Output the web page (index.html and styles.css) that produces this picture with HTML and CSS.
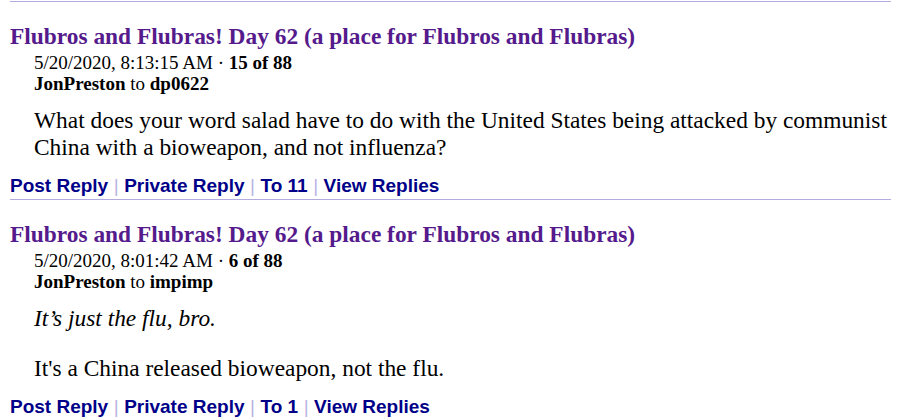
FILE: index.html
```html
<!DOCTYPE html>
<html>
<head>
<meta charset="utf-8">
<link rel="stylesheet" href="styles.css">
</head>
<body>
<div class="post">
  <h2 class="title"><a href="#">Flubros and Flubras! Day 62 (a place for Flubros and Flubras)</a></h2>
  <div class="meta">
    <div>5/20/2020, 8:13:15 AM · <b>15 of 88</b></div>
    <div><b>JonPreston</b> to <b>dp0622</b></div>
  </div>
  <div class="body">
    <p>What does your word salad have to do with the United States being attacked by communist China with a bioweapon, and not influenza?</p>
  </div>
  <div class="links"><a href="#">Post Reply</a><span class="sep">|</span><a href="#">Private Reply</a><span class="sep">|</span><a href="#">To 11</a><span class="sep">|</span><a href="#">View Replies</a></div>
</div>
<div class="post">
  <h2 class="title"><a href="#">Flubros and Flubras! Day 62 (a place for Flubros and Flubras)</a></h2>
  <div class="meta">
    <div>5/20/2020, 8:01:42 AM · <b>6 of 88</b></div>
    <div><b>JonPreston</b> to <b>impimp</b></div>
  </div>
  <div class="body">
    <p><i>It’s just the flu, bro.</i></p>
    <p>It's a China released bioweapon, not the flu.</p>
  </div>
  <div class="links"><a href="#">Post Reply</a><span class="sep">|</span><a href="#">Private Reply</a><span class="sep">|</span><a href="#">To 1</a><span class="sep">|</span><a href="#">View Replies</a></div>
</div>
</body>
</html>
```
FILE: styles.css
```css
body {
  margin: 0;
  padding: 1px 9px 0 10px;
  background: #fff;
  color: #000;
  font-family: "Liberation Serif", "Times New Roman", serif;
}
.post {
  border-top: 1px solid #b3acdf;
}
.title {
  margin: 21px 0 0 0;
  font-family: "Liberation Serif", "Times New Roman", serif;
  font-size: 23.4px;
  line-height: 27px;
  font-weight: bold;
}
.title a {
  color: #551a8b;
  text-decoration: none;
}
.meta {
  margin: 2px 0 0 24px;
  font-family: "Liberation Serif", "Times New Roman", serif;
  font-size: 19px;
  line-height: 21px;
}
.body {
  margin-left: 24px;
  padding-top: 12.6px;
  font-family: "Liberation Serif", "Times New Roman", serif;
  font-size: 23.4px;
  line-height: 27px;
}
.body p {
  margin: 0 0 1em 0;
}
.body p:last-child {
  margin-bottom: 0;
}
.links {
  margin-top: 14px;
  padding-bottom: 2.6px;
  font-family: "Liberation Sans", Arial, sans-serif;
  font-weight: bold;
  font-size: 19px;
  line-height: 22px;
}
.links a {
  color: #000088;
  text-decoration: none;
}
.sep {
  color: #b8b4e4;
  font-weight: normal;
  margin: 0 5.5px;
}
```
